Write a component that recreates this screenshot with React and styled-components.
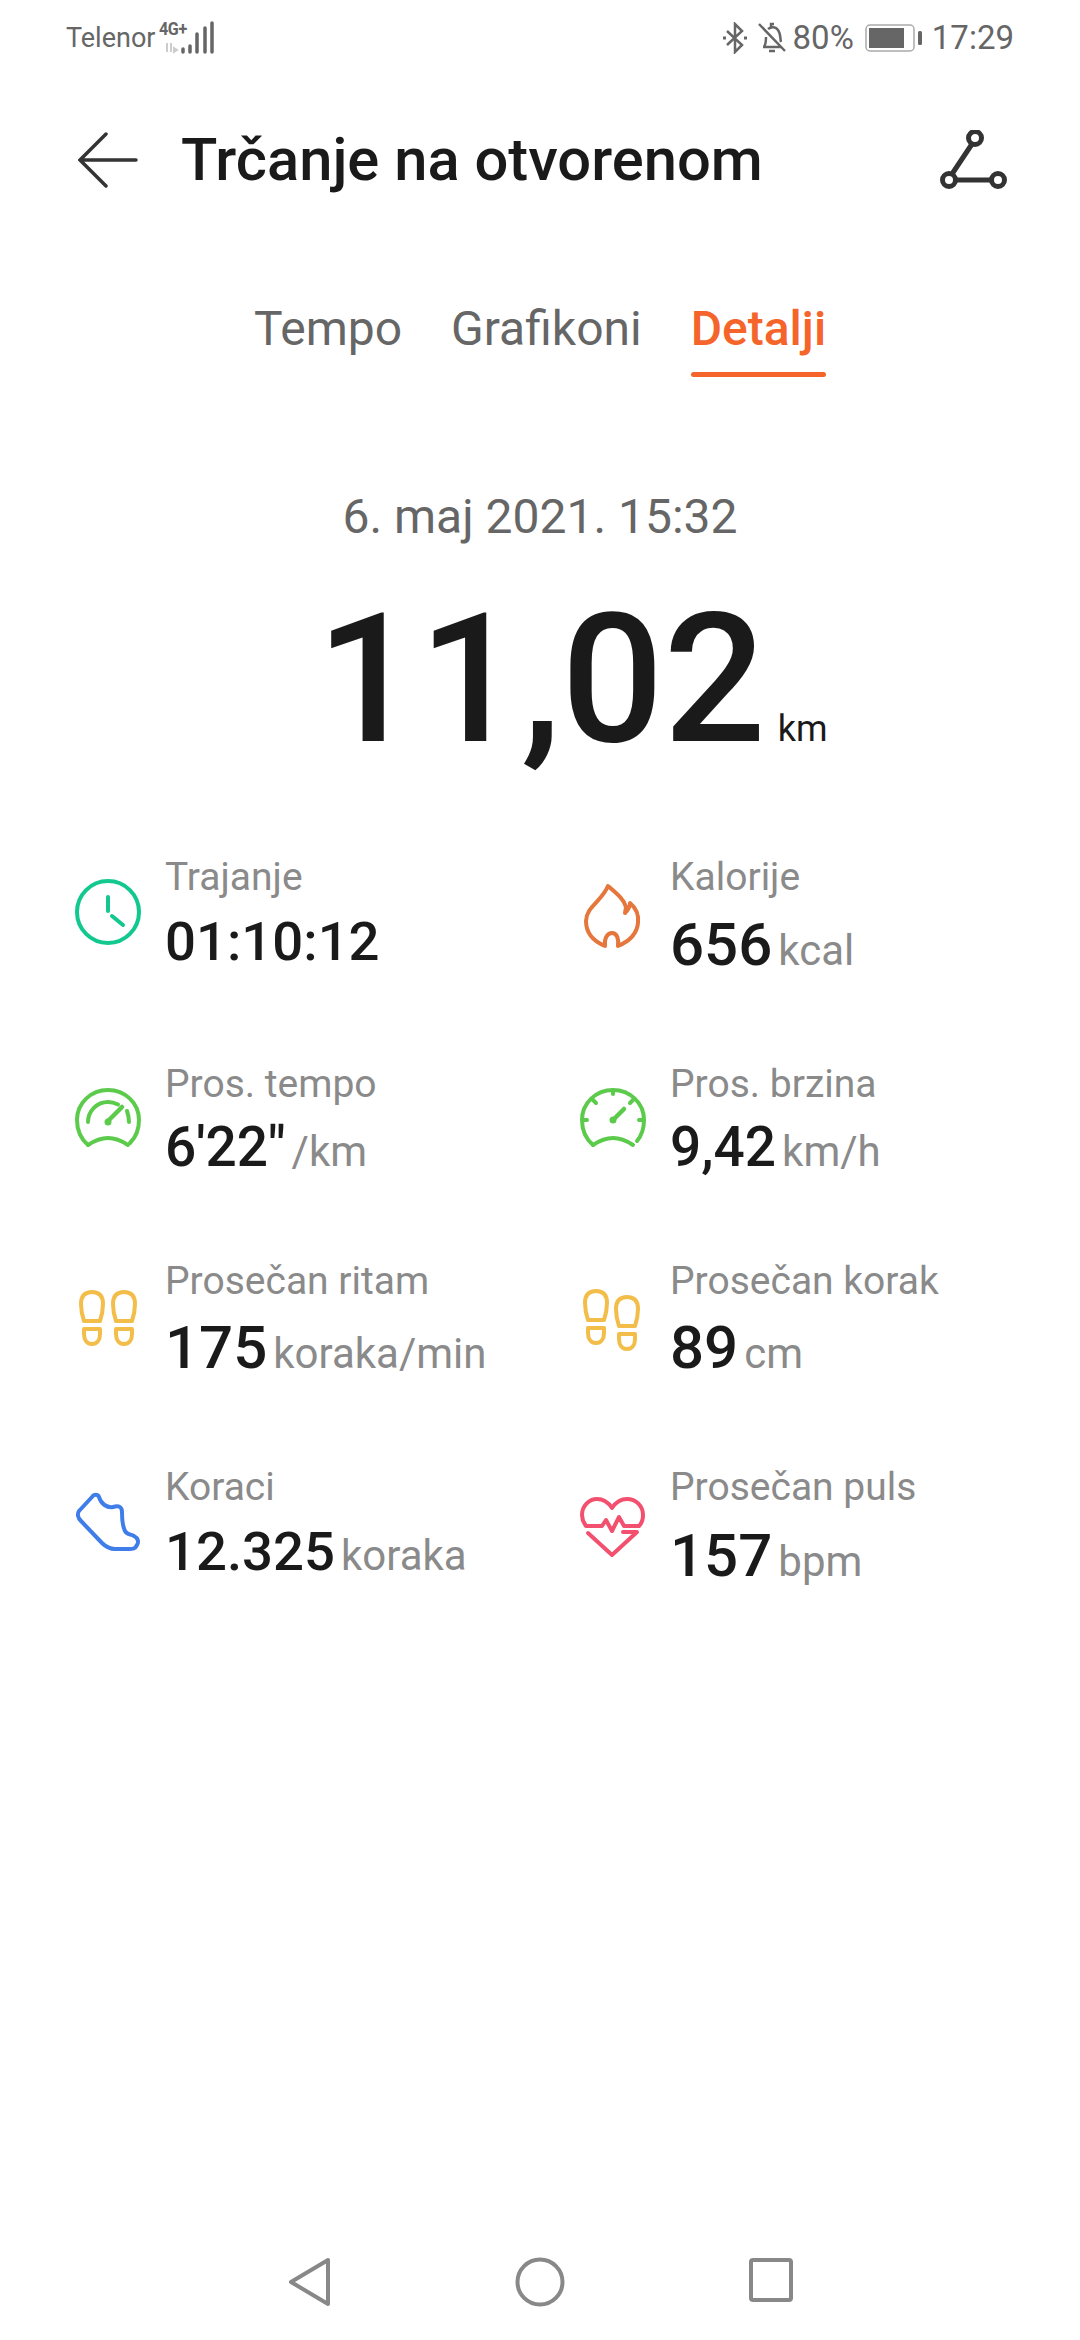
import React from "react"
import styled, { createGlobalStyle } from "styled-components"

const Global = createGlobalStyle`
  html, body { margin: 0; padding: 0; background: #fff; }
  body { font-family: Roboto, "Liberation Sans", sans-serif; }
`

const Page = styled.div`
  width: 1080px;
  height: 2340px;
  display: flex;
  flex-direction: column;
  background: #fff;
  overflow: hidden;
`

const StatusBar = styled.div`
  height: 76px;
  box-sizing: border-box;
  padding: 0 66px;
  display: flex;
  align-items: center;
  justify-content: space-between;
  color: #666;
`
const StatusGroup = styled.div`
  display: flex;
  align-items: center;
`
const Carrier = styled.span`
  font-size: 27px;
  line-height: 30px;
`
const Network = styled.div`
  position: relative;
  width: 64px;
  height: 36px;
  margin-left: 3px;
`
const NetworkType = styled.span`
  position: absolute;
  left: 1px;
  top: -1px;
  font-size: 19px;
  line-height: 20px;
  font-weight: 700;
  letter-spacing: -0.5px;
  transform: scaleX(0.85);
  transform-origin: left center;
`
const StatusText = styled.span`
  font-size: 33px;
  line-height: 38px;
  margin-left: ${(p) => p.$gap}px;
`
const StatusIcon = styled.svg`
  display: block;
  margin-left: ${(p) => p.$gap || 0}px;
`

const Header = styled.header`
  height: 64px;
  margin-top: 52px;
  padding: 0 72px 0 78px;
  display: flex;
  align-items: center;
`
const Title = styled.h1`
  margin: 0 0 0 43px;
  flex: 1;
  font-size: 59.7px;
  line-height: 64px;
  font-weight: 500;
  color: #1a1a1a;
`

const Tabs = styled.nav`
  margin-top: 107px;
  display: flex;
  justify-content: center;
  gap: 49px;
`
const Tab = styled.div`
  position: relative;
  font-size: 48px;
  line-height: 60px;
  font-weight: ${(p) => (p.$active ? 500 : 400)};
  color: ${(p) => (p.$active ? "#f5652b" : "#666")};
  padding-bottom: 18px;
  ${(p) =>
    p.$active &&
    `&::after {
      content: "";
      position: absolute;
      left: 0;
      right: 0;
      bottom: 0;
      height: 5px;
      border-radius: 3px;
      background: #f5652b;
    }`}
`

const DateLine = styled.div`
  margin-top: 110px;
  text-align: center;
  font-size: 48px;
  line-height: 60px;
  color: #666;
`
const Distance = styled.div`
  margin-top: 38px;
  display: flex;
  justify-content: center;
  align-items: baseline;
  color: #1a1a1a;
  height: 190px;
  padding-left: 64px;
`
const DistanceValue = styled.span`
  font-size: 180px;
  line-height: 190px;
  font-weight: 500;
`
const DistanceUnit = styled.span`
  font-size: 36px;
  margin-left: 12px;
`

const Stats = styled.section`
  margin-top: 78px;
  padding-left: 75px;
  display: grid;
  grid-template-columns: 505px 1fr;
  grid-template-rows: 207px 197px 206px 200px;
`
const Stat = styled.div`
  display: flex;
  align-items: flex-start;
`
const IconSlot = styled.div`
  width: 66px;
  height: 66px;
  flex: none;
  margin-top: ${(p) => p.$top}px;
  svg { display: block; }
`
const StatBody = styled.div`
  margin-left: 24px;
`
const Label = styled.div`
  font-size: 39px;
  line-height: 48px;
  color: #8a8a8a;
`
const ValueLine = styled.div`
  margin-top: ${(p) => p.$gap}px;
  display: flex;
  align-items: baseline;
  white-space: nowrap;
`
const Value = styled.span`
  font-size: ${(p) => p.$size}px;
  line-height: 66px;
  font-weight: 500;
  color: #1a1a1a;
`
const Unit = styled.span`
  font-size: 42px;
  color: #8a8a8a;
  margin-left: 6px;
`

const NavBar = styled.footer`
  margin-top: auto;
  height: 83px;
  display: flex;
  align-items: flex-start;
  justify-content: center;
  gap: 183px;
  padding-left: 1px;
  svg { display: block; }
`

const Clock = () => (
  <svg width="66" height="66" viewBox="0 0 66 66" fill="none" stroke="#12c88f" strokeWidth="4" strokeLinecap="round">
    <circle cx="33" cy="33" r="31" />
    <path d="M33 18v14M37 37l11 9" />
  </svg>
)
const Flame = () => (
  <svg width="66" height="66" viewBox="0 0 66 66" fill="none" stroke="#e5763c" strokeWidth="4" strokeLinecap="round" strokeLinejoin="round">
    <path d="M28 3C36 10 44 16 46 24L45 30C47 28 50 24 50 20 56 25 59 32 58 40 57 50 50 58 38 63 39 56 37 50 32 50 27 50 24 56 25 63 13 58 6 50 6 38 6 24 22 18 28 3z" />
  </svg>
)
const PaceGauge = () => (
  <svg width="66" height="66" viewBox="0 0 66 66" fill="none" stroke="#5ccb4c" strokeWidth="4" strokeLinecap="round" strokeLinejoin="round">
    <path d="M13 58C6 52 2 43 2 33 2 16 16 3 33 3s31 13 31 30c0 9-3 17-9 23" />
    <path d="M13 58c6-4 13-7 20-7s14 3 20 7" />
    <path d="M13 35c0-11 9-20 20-20 4 0 7 1 10 2.500" />
    <path d="M52 24c1 3 2 7 2 11" />
    <path d="M33 34l14-14" strokeWidth="4.500" />
    <circle cx="33" cy="35" r="3.500" fill="#5ccb4c" stroke="none" />
  </svg>
)
const SpeedGauge = () => (
  <svg width="66" height="66" viewBox="0 0 66 66" fill="none" stroke="#5ccb4c" strokeWidth="4" strokeLinecap="round" strokeLinejoin="round">
    <path d="M13 58C6 52 2 43 2 33 2 16 16 3 33 3s31 13 31 30c0 8-2 15-7 21" />
    <path d="M13 58c6-4 13-7 20-7s14 3 20 7" />
    <path d="M33 4v3M13 13l3 3M53 13l-3 3M4 33h3M62 33h-3" />
    <path d="M33 33l11-11" strokeWidth="4.500" />
    <circle cx="33" cy="33" r="3.500" fill="#5ccb4c" stroke="none" />
  </svg>
)
const Foot = ({ x, y }) => (
  <g transform={`translate(${x} ${y})`}>
    <path d="M4 31C2 25 1 19 1 14 1 6 5 2 12 2s11 4 11 12c0 5-1 11-3 17z" />
    <path d="M4 39h16v5c0 6-3 10-8 10s-8-4-8-10z" />
  </g>
)
const Feet = ({ offset }) => (
  <svg width="66" height="66" viewBox="0 0 66 66" fill="none" stroke="#f3bd4a" strokeWidth="4" strokeLinejoin="round">
    <Foot x={offset ? 4 : 5} y={0} />
    <Foot x={offset ? 35 : 37} y={offset ? 6 : 0} />
  </svg>
)
const Shoe = () => (
  <svg width="66" height="66" viewBox="0 0 66 66" fill="none" stroke="#3f7de8" strokeWidth="4" strokeLinejoin="round" strokeLinecap="round">
    <path d="M4 20L17 6C19 3 23 3 24 6 26 13 32 17 38 16 44 14 47 16 47 21 47 30 48 36 50 40 52 44 56 43 59 45 63 47 64 51 62 54 60 58 58 58 54 58H40C35 58 31 56 27 52L6 30C3 27 2 23 4 20z" />
  </svg>
)
const Heart = () => (
  <svg width="66" height="66" viewBox="0 0 66 66" fill="none" stroke="#f2506e" strokeWidth="4" strokeLinejoin="round" strokeLinecap="round">
    <path d="M6 31C3 27 2 23 2 20 2 11 9 4 17 4 23 4 28 7 32 13 36 7 41 4 47 4 56 4 63 11 63 20 63 24 62 28 59 31H44L39 22 32 36 26 25 22 31z" />
    <path d="M8 38L32 60 57 37H43" />
  </svg>
)

const stats = [
  { label: "Trajanje", value: "01:10:12", size: 54.5, gap: 7, icon: <Clock />, top: 26 },
  { label: "Kalorije", value: "656", unit: "kcal", size: 60, gap: 11, icon: <Flame />, top: 30 },
  { label: "Pros. tempo", value: "6'22\"", unit: "/km", size: 55, gap: 6, icon: <PaceGauge />, top: 27 },
  { label: "Pros. brzina", value: "9,42", unit: "km/h", size: 55, gap: 6, icon: <SpeedGauge />, top: 27 },
  { label: "Prosečan ritam", value: "175", unit: "koraka/min", size: 60, gap: 10, icon: <Feet />, top: 33 },
  { label: "Prosečan korak", value: "89", unit: "cm", size: 60, gap: 10, icon: <Feet offset />, top: 32 },
  { label: "Koraci", value: "12.325", unit: "koraka", size: 54.5, gap: 7, icon: <Shoe />, top: 28 },
  { label: "Prosečan puls", value: "157", unit: "bpm", size: 60, gap: 12, icon: <Heart />, top: 32 },
]

export default function App() {
  return (
    <Page>
      <Global />
      <StatusBar>
        <StatusGroup>
          <Carrier>Telenor</Carrier>
          <Network>
            <NetworkType>4G+</NetworkType>
            <svg width="64" height="36" viewBox="0 0 64 36">
              <path d="M9 32V23M13 32V23M16 28l3 2-3 2z" stroke="#ccc" strokeWidth="2" fill="#ccc" />
              <g stroke="#666" strokeWidth="3.500" strokeLinecap="round">
                <path d="M25 32v-3M32 32v-6M39 32V14M47 32V8M54 32V3" />
              </g>
            </svg>
          </Network>
        </StatusGroup>
        <StatusGroup>
          <StatusIcon width="26" height="32" viewBox="0 0 26 32" fill="none" stroke="#666" strokeWidth="2.500">
            <path d="M5 9l15 14-7 7V2l7 7L5 23" />
            <path d="M1 16h3M22 16h3" strokeWidth="3" />
          </StatusIcon>
          <StatusIcon $gap={9} width="30" height="32" viewBox="0 0 30 32" fill="none" stroke="#666" strokeWidth="2.500">
            <path d="M2 2l26 27M6 25h18M7 25c2-3 2-6 2-10M11 7c4-3 8-2 10 1 3 4 2 9 3 12M14 5V2h3M12 29h6" />
          </StatusIcon>
          <StatusText $gap={6}>80%</StatusText>
          <StatusIcon $gap={11} width="58" height="28" viewBox="0 0 58 28" fill="none">
            <rect x="1" y="1" width="48" height="26" rx="4" stroke="#aaa" strokeWidth="1.500" />
            <rect x="4" y="4" width="35" height="20" fill="#666" />
            <rect x="53" y="7" width="4" height="14" rx="1.500" fill="#666" />
          </StatusIcon>
          <StatusText $gap={9}>17:29</StatusText>
        </StatusGroup>
      </StatusBar>

      <Header>
        <svg width="60" height="56" viewBox="0 0 60 56" fill="none" stroke="#333" strokeWidth="3.500" strokeLinecap="round">
          <path d="M28 2L2 28l26 26M4 28h54" />
        </svg>
        <Title>Trčanje na otvorenom</Title>
        <svg width="68" height="60" viewBox="0 0 68 60" fill="none" stroke="#333" strokeWidth="5">
          <circle cx="35" cy="8" r="6.500" />
          <circle cx="9" cy="50" r="6.500" />
          <circle cx="58" cy="50" r="6.500" />
          <path d="M32 14L12 44M16 50h35" />
        </svg>
      </Header>

      <Tabs>
        <Tab>Tempo</Tab>
        <Tab>Grafikoni</Tab>
        <Tab $active>Detalji</Tab>
      </Tabs>

      <DateLine>6. maj 2021. 15:32</DateLine>
      <Distance>
        <DistanceValue>11,02</DistanceValue>
        <DistanceUnit>km</DistanceUnit>
      </Distance>

      <Stats>
        {stats.map((s) => (
          <Stat key={s.label}>
            <IconSlot $top={s.top}>{s.icon}</IconSlot>
            <StatBody>
              <Label>{s.label}</Label>
              <ValueLine $gap={s.gap}>
                <Value $size={s.size}>{s.value}</Value>
                {s.unit && <Unit>{s.unit}</Unit>}
              </ValueLine>
            </StatBody>
          </Stat>
        ))}
      </Stats>

      <NavBar>
        <svg width="44" height="50" viewBox="0 0 44 50" fill="none" stroke="#888" strokeWidth="4" strokeLinejoin="round">
          <path d="M40 3v44L3 25z" />
        </svg>
        <svg width="50" height="50" viewBox="0 0 50 50" fill="none" stroke="#888" strokeWidth="4">
          <circle cx="25" cy="25" r="22.500" />
        </svg>
        <svg width="46" height="46" viewBox="0 0 46 46" fill="none" stroke="#888" strokeWidth="4" strokeLinejoin="round">
          <rect x="3" y="3" width="40" height="40" rx="2" />
        </svg>
      </NavBar>
    </Page>
  )
}
